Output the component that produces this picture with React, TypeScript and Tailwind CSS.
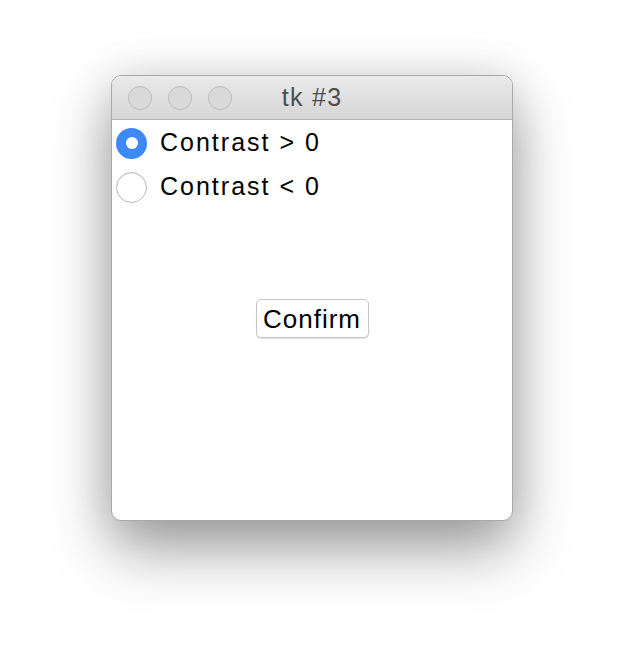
export default function App() {
  return (
    <div className="w-[624px] h-[668px] bg-white pt-[75px] pl-[111px]" style={{ fontFamily: '"Liberation Sans", Arial, sans-serif' }}>
      <div className="w-[402px] h-[446px] rounded-[10px] border border-[#a9a9a9] bg-white overflow-hidden flex flex-col shadow-[0_28px_60px_rgba(0,0,0,0.38),0_0_45px_rgba(0,0,0,0.10)]">
        {/* Title bar */}
        <div className="relative h-[44px] shrink-0 bg-gradient-to-b from-[#ebebeb] to-[#d5d5d5] border-b border-[#b4b4b4] flex items-center">
          <div className="flex items-center gap-4 pl-4">
            <span className="w-6 h-6 rounded-full bg-[#d9d9d9] border border-[#bcbcbc]" />
            <span className="w-6 h-6 rounded-full bg-[#d9d9d9] border border-[#bcbcbc]" />
            <span className="w-6 h-6 rounded-full bg-[#d9d9d9] border border-[#bcbcbc]" />
          </div>
          <div className="absolute inset-0 flex items-center justify-center text-[25px] text-[#4d4d4d] tracking-[1.3px]">
            tk #3
          </div>
        </div>

        {/* Content */}
        <div className="flex-1 flex flex-col pl-[4px] pt-[1px]">
          <label className="flex items-center h-[44px] gap-[13px]">
            <span className="w-[31px] h-[31px] rounded-full bg-[#3d8af7] flex items-center justify-center">
              <span className="w-[12px] h-[12px] rounded-full bg-white" />
            </span>
            <span className="text-[25px] text-black tracking-[2px]">Contrast &gt; 0</span>
          </label>
          <label className="flex items-center h-[44px] gap-[13px]">
            <span className="w-[31px] h-[31px] rounded-full bg-white border border-[#b9b9b9] shadow-[inset_0_1px_1px_rgba(0,0,0,0.08)]" />
            <span className="text-[25px] text-black tracking-[2px]">Contrast &lt; 0</span>
          </label>

          <div className="flex justify-center pt-[90px] pr-[4px]">
            <button className="w-[113px] h-[39px] rounded-[5px] border border-[#c6c6c6] bg-white shadow-[0_1px_1px_rgba(0,0,0,0.12)] text-[26px] text-black tracking-[1px] leading-none flex items-center justify-center">
              Confirm
            </button>
          </div>
        </div>
      </div>
    </div>
  )
}
